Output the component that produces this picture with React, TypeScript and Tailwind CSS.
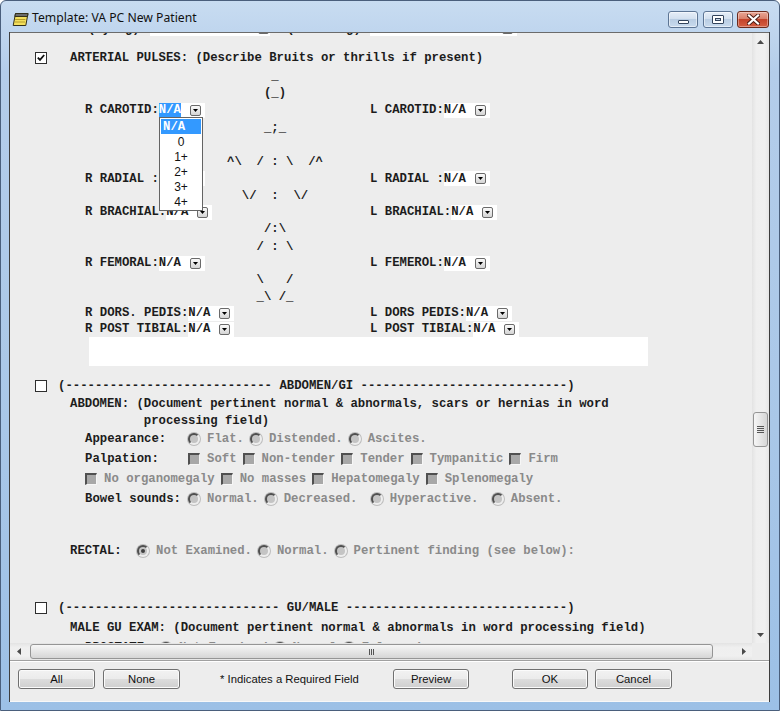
import React from "react";

const MONO = "font-['Liberation_Mono','Courier_New',monospace] font-bold text-[12.3px] leading-[14px]";
const SANS = "font-['Liberation_Sans',Arial,sans-serif]";

function Tri({ dir }: { dir: "up" | "down" | "left" | "right" }) {
  const vert = dir === "up" || dir === "down";
  const w = vert ? 7 : 4;
  const h = vert ? 4 : 7;
  const d =
    dir === "up" ? "M0 4L3.5 0L7 4Z" : dir === "down" ? "M0 0H7L3.5 4Z" : dir === "left" ? "M4 0V7L0 3.5Z" : "M0 0L4 3.5L0 7Z";
  return (
    <svg width={w} height={h} viewBox={`0 0 ${w} ${h}`}>
      <path d={d} fill="#4a4a4a" />
    </svg>
  );
}

function DropBtn({ cls = "" }: { cls?: string }) {
  return (
    <span
      className={`inline-flex shrink-0 items-center justify-center w-[11px] h-[11px] rounded-[2px] border border-[#6a6a6a] bg-[linear-gradient(to_bottom,#fafafa,#d4d4d4)] ${cls}`}
    >
      <svg width="5" height="3" viewBox="0 0 5 3">
        <path d="M0 0H5L2.5 3Z" fill="#000" />
      </svg>
    </span>
  );
}

function Combo({ hl = false }: { hl?: boolean }) {
  return (
    <span className="inline-flex items-center h-[15px] bg-white pr-[4px]">
      <span className={hl ? "bg-[#3399ff] text-white h-[14px] flex items-center" : "text-[#1c1c1c]"}>N/A</span>
      <DropBtn cls="ml-[9px]" />
    </span>
  );
}

function TopCheck({ checked = false }: { checked?: boolean }) {
  return (
    <span className="w-[12px] h-[12px] shrink-0 bg-white border border-[#2e2e2e] flex items-center justify-center">
      {checked && (
        <svg width="8" height="8" viewBox="0 0 8 8">
          <path d="M0.8 3.6L3 5.9L7.2 1" stroke="#111" strokeWidth="1.8" fill="none" />
        </svg>
      )}
    </span>
  );
}

function DBox() {
  return (
    <span className="w-[12px] h-[12px] shrink-0 bg-[#a8a8a8] border-t-2 border-l-2 border-r border-b border-t-[#505050] border-l-[#505050] border-r-[#f6f6f6] border-b-[#f6f6f6]" />
  );
}

function Radio({ on = false }: { on?: boolean }) {
  return (
    <span className="w-[12px] h-[12px] shrink-0 rounded-full bg-[#c4c4c4] border-2 border-t-[#4f4f4f] border-l-[#4f4f4f] border-r-[#eeeeee] border-b-[#eeeeee] shadow-[0_0_0_1px_#bdbdbd] flex items-center justify-center">
      {on && <span className="w-[4px] h-[4px] rounded-full bg-[#3f3f3f]" />}
    </span>
  );
}

function Opt({ r = false, label, on = false }: { r?: boolean; label: string; on?: boolean }) {
  return (
    <span className="flex items-center shrink-0">
      {r ? <Radio on={on} /> : <DBox />}
      <span className="ml-[7px] mr-[6px] text-[#8a8a8a] whitespace-pre">{label}</span>
    </span>
  );
}

function Btn({ children, cls = "", w = "w-[77px]" }: { children: React.ReactNode; cls?: string; w?: string }) {
  return (
    <div
      className={`h-[20px] shrink-0 rounded-[3px] border border-[#707070] bg-[linear-gradient(to_bottom,#f2f2f2_0%,#ebebeb_50%,#dddddd_50%,#cfcfcf_100%)] shadow-[inset_0_0_0_1px_#fbfbfb] flex items-center justify-center text-[11.3px] text-[#111] ${SANS} ${w} ${cls}`}
    >
      {children}
    </div>
  );
}

function DropList() {
  return (
    <div className="absolute left-[74px] top-[16px] z-10 w-[44px] bg-white border border-[#646464] p-[1px]">
      <div className="h-[15px] bg-[#3399ff] text-white flex items-center pl-[2px]">N/A</div>
      {["0", "1+", "2+", "3+", "4+"].map((v) => (
        <div key={v} className={`h-[15px] flex items-center justify-center text-[12px] font-normal text-[#111] ${SANS}`}>
          {v}
        </div>
      ))}
    </div>
  );
}

type PRowT = { h: string; art?: string; l?: string; r?: string; list?: boolean };

const pulseRows: PRowT[] = [
  { h: "h-[18px]", art: "      _" },
  { h: "h-[16px]", art: "     (_)" },
  { h: "h-[18px]", l: "R CAROTID:", r: "L CAROTID:", list: true },
  { h: "h-[18px]", art: "     _;_" },
  { h: "h-[16px]" },
  { h: "h-[17px]", art: "^\\  / : \\  /^" },
  { h: "h-[17px]", l: "R RADIAL :", r: "L RADIAL :" },
  { h: "h-[17px]", art: "  \\/  :  \\/" },
  { h: "h-[16px]", l: "R BRACHIAL:", r: "L BRACHIAL:" },
  { h: "h-[18px]", art: "     /:\\" },
  { h: "h-[17px]", art: "    / : \\" },
  { h: "h-[16px]", l: "R FEMORAL:", r: "L FEMEROL:" },
  { h: "h-[17px]", art: "    \\   /" },
  { h: "h-[17px]", art: "    _\\ /_" },
  { h: "h-[16px]", l: "R DORS. PEDIS:", r: "L DORS PEDIS:" },
  { h: "h-[16px]", l: "R POST TIBIAL:", r: "L POST TIBIAL:" },
];

function TitleIcon() {
  return (
    <svg width="17" height="16" viewBox="0 0 17 16">
      <path d="M3.5 2.5 L16 2.5 L13.8 14.5 L1.2 14.5 Z" fill="#f3df5c" stroke="#33301a" strokeWidth="1" />
      <path d="M3.5 2.5 L16 2.5 L15.4 5.5 L2.9 5.5 Z" fill="#6b6b6b" stroke="#33301a" strokeWidth="1" />
      <path d="M3.2 8.5 H13.4 M2.8 11 H13" stroke="#b59c2a" strokeWidth="1" />
    </svg>
  );
}

export default function App() {
  const abdHeader = "(" + "-".repeat(28) + " ABDOMEN/GI " + "-".repeat(28) + ")";
  const guHeader = "(" + "-".repeat(29) + " GU/MALE " + "-".repeat(30) + ")";

  return (
    <div className="w-[780px] h-[711px] rounded-t-[6px] border border-[#4a5f7c] bg-[linear-gradient(to_bottom,#c8dcf1_0%,#b4cdea_10%,#a9c7e8_60%,#9cc0e6_100%)] flex flex-col overflow-hidden">
      {/* Title bar */}
      <div className="h-[31px] shrink-0 flex items-center">
        <span className="ml-[11px] mt-[5px]">
          <TitleIcon />
        </span>
        <span className="ml-[3px] mt-[4px] text-[12.2px] text-[#111] font-['Noto_Sans','Open_Sans',sans-serif]">
          Template: VA PC New Patient
        </span>
        <div className="ml-auto mr-[10px] self-start mt-[10px] flex">
          <div className="w-[30px] h-[17px] rounded-[3px] border border-[#5d7594] bg-[linear-gradient(to_bottom,#e6eef8_0%,#d3e0ef_45%,#b9cde3_50%,#c9dbee_100%)] shadow-[inset_0_0_0_1px_rgba(255,255,255,0.5)] flex items-end justify-center pb-[3px]">
            <span className="w-[11px] h-[4px] bg-white border border-[#33445c] rounded-[1px]" />
          </div>
          <div className="ml-[5px] w-[30px] h-[17px] rounded-[3px] border border-[#5d7594] bg-[linear-gradient(to_bottom,#e6eef8_0%,#d3e0ef_45%,#b9cde3_50%,#c9dbee_100%)] shadow-[inset_0_0_0_1px_rgba(255,255,255,0.5)] flex items-center justify-center">
            <span className="w-[12px] h-[9px] bg-white border border-[#33445c] rounded-[1px] flex items-center justify-center">
              <span className="w-[6px] h-[3px] border border-[#33445c] bg-[#c9d6e6]" />
            </span>
          </div>
          <div className="ml-[4px] w-[32px] h-[17px] rounded-[3px] border border-[#6b2a1c] bg-[linear-gradient(to_bottom,#eaa796_0%,#d9806b_45%,#c4432a_50%,#d55f43_100%)] shadow-[inset_0_0_0_1px_rgba(255,255,255,0.35)] flex items-center justify-center">
            <svg width="13" height="11" viewBox="0 0 13 11">
              <path d="M2 1.5L11 9.5M11 1.5L2 9.5" stroke="#4a1a12" strokeWidth="4" strokeLinecap="square" />
              <path d="M2 1.5L11 9.5M11 1.5L2 9.5" stroke="#ffffff" strokeWidth="2.2" strokeLinecap="square" />
            </svg>
          </div>
        </div>
      </div>

      {/* Client */}
      <div className="h-[670px] shrink-0 ml-[8px] mr-[9px] flex flex-col border-x border-[#3e3e3e] bg-[#ededed]">
        {/* scroll region */}
        <div className="border-t border-[#6b6b6b] flex flex-col">
          <div className="h-[610px] flex">
            {/* content */}
            <div className={`w-[742px] h-[610px] overflow-hidden flex flex-col text-[#1c1c1c] ${MONO}`}>
              {/* clipped row */}
              <div className="h-[15px] -mt-[12px] shrink-0 flex items-center pl-[78px] whitespace-pre">
                <span className="w-[62px] shrink-0">(Lying)</span>
                <span className="w-[120px] h-[15px] shrink-0 bg-white flex items-center justify-end pr-[1px]">
                  <DropBtn />
                </span>
                <span className="ml-[17px] w-[83px] shrink-0">(Standing)</span>
                <span className="w-[147px] h-[15px] shrink-0 bg-white flex items-center justify-end pr-[4px]">
                  <DropBtn />
                </span>
              </div>

              {/* ARTERIAL */}
              <div className="mt-[13px] h-[18px] shrink-0 flex items-center">
                <span className="ml-[25px]">
                  <TopCheck checked />
                </span>
                <span className="ml-[23px] whitespace-pre">ARTERIAL PULSES: (Describe Bruits or thrills if present)</span>
              </div>

              <div className="ml-[75px] flex flex-col shrink-0">
                {pulseRows.map((r, i) => (
                  <div key={i} className={`flex items-center shrink-0 ${r.h}`}>
                    <div className="w-[142px] shrink-0 self-stretch flex items-center whitespace-pre relative">
                      {r.l && (
                        <>
                          <span>{r.l}</span>
                          <Combo hl={!!r.list} />
                        </>
                      )}
                      {r.list && <DropList />}
                    </div>
                    <div className="w-[143px] shrink-0 whitespace-pre">{r.art ?? ""}</div>
                    <div className="flex items-center whitespace-pre">
                      {r.r && (
                        <>
                          <span>{r.r}</span>
                          <Combo />
                        </>
                      )}
                    </div>
                  </div>
                ))}
              </div>

              <div className="ml-[79px] w-[559px] h-[29px] shrink-0 bg-white" />

              {/* ABDOMEN */}
              <div className="mt-[10px] h-[19px] shrink-0 flex items-center">
                <span className="ml-[25px]">
                  <TopCheck />
                </span>
                <span className="ml-[11px] whitespace-pre">{abdHeader}</span>
              </div>
              <div className="h-[18px] shrink-0 flex items-center pl-[60px] whitespace-pre">
                ABDOMEN: (Document pertinent normal &amp; abnormals, scars or hernias in word
              </div>
              <div className="h-[16px] shrink-0 flex items-center pl-[60px] whitespace-pre">
                {"          processing field)"}
              </div>
              <div className="h-[20px] shrink-0 flex items-center pl-[75px]">
                <span className="w-[103px] shrink-0">Appearance:</span>
                <Opt r label="Flat." />
                <Opt r label="Distended." />
                <Opt r label="Ascites." />
              </div>
              <div className="h-[20px] shrink-0 flex items-center pl-[75px]">
                <span className="w-[103px] shrink-0">Palpation:</span>
                <Opt label="Soft" />
                <Opt label="Non-tender" />
                <Opt label="Tender" />
                <Opt label="Tympanitic" />
                <Opt label="Firm" />
              </div>
              <div className="h-[20px] shrink-0 flex items-center pl-[75px]">
                <Opt label="No organomegaly" />
                <Opt label="No masses" />
                <Opt label="Hepatomegaly" />
                <Opt label="Splenomegaly" />
              </div>
              <div className="h-[20px] shrink-0 flex items-center pl-[75px]">
                <span className="w-[103px] shrink-0">Bowel sounds:</span>
                <Opt r label="Normal." />
                <Opt r label="Decreased. " />
                <Opt r label="Hyperactive. " />
                <Opt r label="Absent." />
              </div>

              <div className="mt-[32px] h-[20px] shrink-0 flex items-center pl-[60px]">
                <span className="w-[67px] shrink-0">RECTAL:</span>
                <Opt r on label="Not Examined." />
                <Opt r label="Normal." />
                <Opt r label="Pertinent finding (see below):" />
              </div>

              {/* GU */}
              <div className="mt-[37px] h-[20px] shrink-0 flex items-center">
                <span className="ml-[25px]">
                  <TopCheck />
                </span>
                <span className="ml-[11px] whitespace-pre">{guHeader}</span>
              </div>
              <div className="h-[20px] shrink-0 flex items-center pl-[60px] whitespace-pre">
                MALE GU EXAM: (Document pertinent normal &amp; abnormals in word processing field)
              </div>
              <div className="h-[20px] shrink-0 flex items-center pl-[75px]">
                <span className="w-[75px] shrink-0">PROSTATE:</span>
                <Opt r label="Not Examined" />
                <Opt r label="Normal" />
                <Opt r label="Enlarged" />
              </div>
            </div>

            {/* vertical scrollbar */}
            <div className="w-[17px] h-[610px] flex flex-col bg-[linear-gradient(to_right,#e3e3e3,#efefef_25%,#f0f0f0_75%,#e6e6e6)]">
              <div className="h-[17px] flex items-center justify-center">
                <Tri dir="up" />
              </div>
              <div className="mt-[362px] mx-auto w-[15px] h-[35px] rounded-[3px] border border-[#959595] bg-[linear-gradient(to_right,#f6f6f6,#e6e6e6_50%,#d6d6d6)] flex flex-col items-center justify-center gap-[1px]">
                <span className="w-[7px] h-[1px] bg-[#555]" />
                <span className="w-[7px] h-[1px] bg-[#555]" />
                <span className="w-[7px] h-[1px] bg-[#555]" />
                <span className="w-[7px] h-[1px] bg-[#555]" />
              </div>
              <div className="flex-1" />
              <div className="h-[17px] flex items-center justify-center">
                <Tri dir="down" />
              </div>
            </div>
          </div>

          {/* horizontal scrollbar */}
          <div className="h-[17px] flex">
            <div className="w-[742px] h-[17px] flex items-center bg-[linear-gradient(to_bottom,#e3e3e3,#efefef_25%,#f0f0f0_75%,#e6e6e6)]">
              <div className="w-[17px] h-[17px] flex items-center justify-center">
                <Tri dir="left" />
              </div>
              <div className="ml-[3px] w-[683px] h-[15px] rounded-[3px] border border-[#959595] bg-[linear-gradient(to_bottom,#f6f6f6,#e6e6e6_50%,#d6d6d6)] flex items-center justify-center gap-[1px]">
                <span className="w-[1px] h-[6px] bg-[#555]" />
                <span className="w-[1px] h-[6px] bg-[#555]" />
                <span className="w-[1px] h-[6px] bg-[#555]" />
              </div>
              <div className="flex-1" />
              <div className="w-[17px] h-[17px] flex items-center justify-center">
                <Tri dir="right" />
              </div>
            </div>
            <div className="w-[17px] h-[17px] bg-[#ececec]" />
          </div>
        </div>

        {/* separator */}
        <div className="h-[2px] shrink-0 border-t border-[#a0a0a0] bg-white" />

        {/* bottom panel */}
        <div className="h-[40px] shrink-0 flex items-start pt-[7px] border-b border-[#f8f8f8]">
          <Btn cls="ml-[8px]">All</Btn>
          <Btn cls="ml-[8px]">None</Btn>
          <span className={`ml-[40px] w-[173px] shrink-0 h-[20px] flex items-center text-[11.3px] text-[#111] ${SANS}`}>
            * Indicates a Required Field
          </span>
          <Btn w="w-[76px]">Preview</Btn>
          <Btn cls="ml-[43px]" w="w-[76px]">OK</Btn>
          <Btn cls="ml-[7px]">Cancel</Btn>
        </div>
      </div>
      <div className="flex-1" />
    </div>
  );
}
